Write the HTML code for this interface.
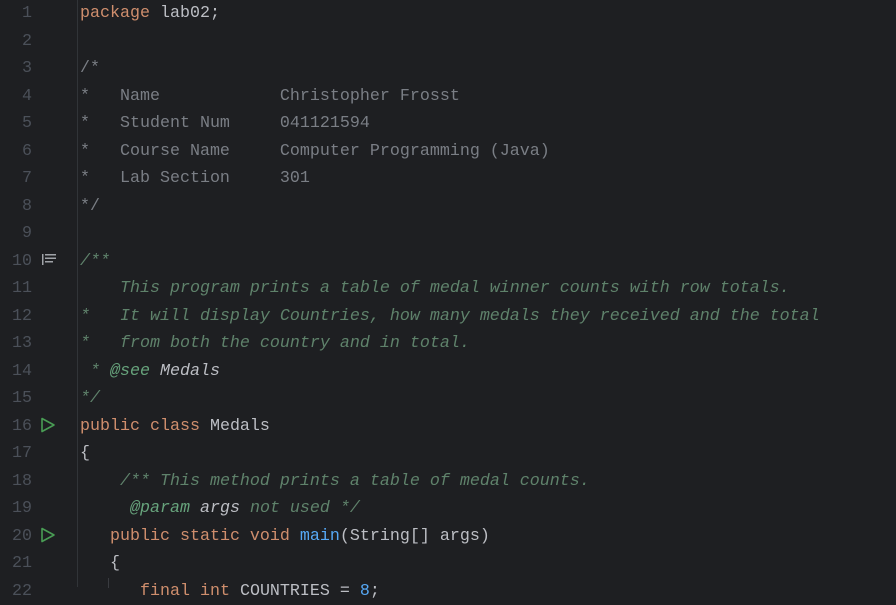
<!DOCTYPE html>
<html><head><meta charset="utf-8"><style>
html,body{margin:0;padding:0;background:#1e1f22;width:896px;height:587px;overflow:hidden}
body{font-family:"Liberation Mono","DejaVu Sans Mono",monospace;font-size:16.67px;color:#bcbec4}
.g{position:absolute;left:0;top:0;width:77px;height:587px;border-right:1px solid #313438}
.ln{position:absolute;left:0;width:32px;text-align:right;color:#4b5059;line-height:27.5px;height:27.5px}
.c{position:absolute;left:80px;top:0;white-space:pre;line-height:27.5px}
.cm{color:#7a7e85}.d{color:#5f826b;font-style:italic}.k{color:#cf8e6d}.m{color:#56a8f5}.t{color:#67a37c;font-style:italic}.w{color:#bcbec4;font-style:italic}
.guide{position:absolute;left:108px;top:578px;width:1px;height:10px;background:#393b40}
</style></head><body>
<div class="g"></div>
<div class="ln" style="top:0">1</div><div class="ln" style="top:27.5px">2</div><div class="ln" style="top:55px">3</div><div class="ln" style="top:82.5px">4</div><div class="ln" style="top:110px">5</div><div class="ln" style="top:137.5px">6</div><div class="ln" style="top:165px">7</div><div class="ln" style="top:192.5px">8</div><div class="ln" style="top:220px">9</div><div class="ln" style="top:247.5px">10</div><div class="ln" style="top:275px">11</div><div class="ln" style="top:302.5px">12</div><div class="ln" style="top:330px">13</div><div class="ln" style="top:357.5px">14</div><div class="ln" style="top:385px">15</div><div class="ln" style="top:412.5px">16</div><div class="ln" style="top:440px">17</div><div class="ln" style="top:467.5px">18</div><div class="ln" style="top:495px">19</div><div class="ln" style="top:522.5px">20</div><div class="ln" style="top:550px">21</div><div class="ln" style="top:577.5px">22</div>
<svg style="position:absolute;left:40px;top:253px" width="18" height="14"><rect x="2" y="1" width="1.5" height="11" fill="#a0a3a8"/><rect x="5" y="1" width="11" height="1.5" fill="#a0a3a8"/><rect x="5" y="4.5" width="11" height="1.5" fill="#a0a3a8"/><rect x="5" y="8" width="8" height="1.5" fill="#a0a3a8"/></svg>
<svg style="position:absolute;left:40px;top:417px" width="16" height="16"><path d="M2 1.5 L14 8 L2 14.5 Z" fill="none" stroke="#499c54" stroke-width="1.6" stroke-linejoin="round"/></svg>
<svg style="position:absolute;left:40px;top:527px" width="16" height="16"><path d="M2 1.5 L14 8 L2 14.5 Z" fill="none" stroke="#499c54" stroke-width="1.6" stroke-linejoin="round"/></svg>
<div class="guide"></div>
<div class="c"><span class="k">package</span> lab02;

<span class="cm">/*
*   Name            Christopher Frosst
*   Student Num     041121594
*   Course Name     Computer Programming (Java)
*   Lab Section     301
*/</span>

<span class="d">/**
    This program prints a table of medal winner counts with row totals.
*   It will display Countries, how many medals they received and the total
*   from both the country and in total.
 * <span class="t">@see</span> <span class="w">Medals</span>
*/</span>
<span class="k">public class</span> Medals
{
    <span class="d">/** This method prints a table of medal counts.
     <span class="t">@param</span> <span class="w">args</span> not used */</span>
   <span class="k">public static void</span> <span class="m">main</span>(String[] args)
   {
      <span class="k">final int</span> COUNTRIES = <span class="m">8</span>;</div>
</body></html>
